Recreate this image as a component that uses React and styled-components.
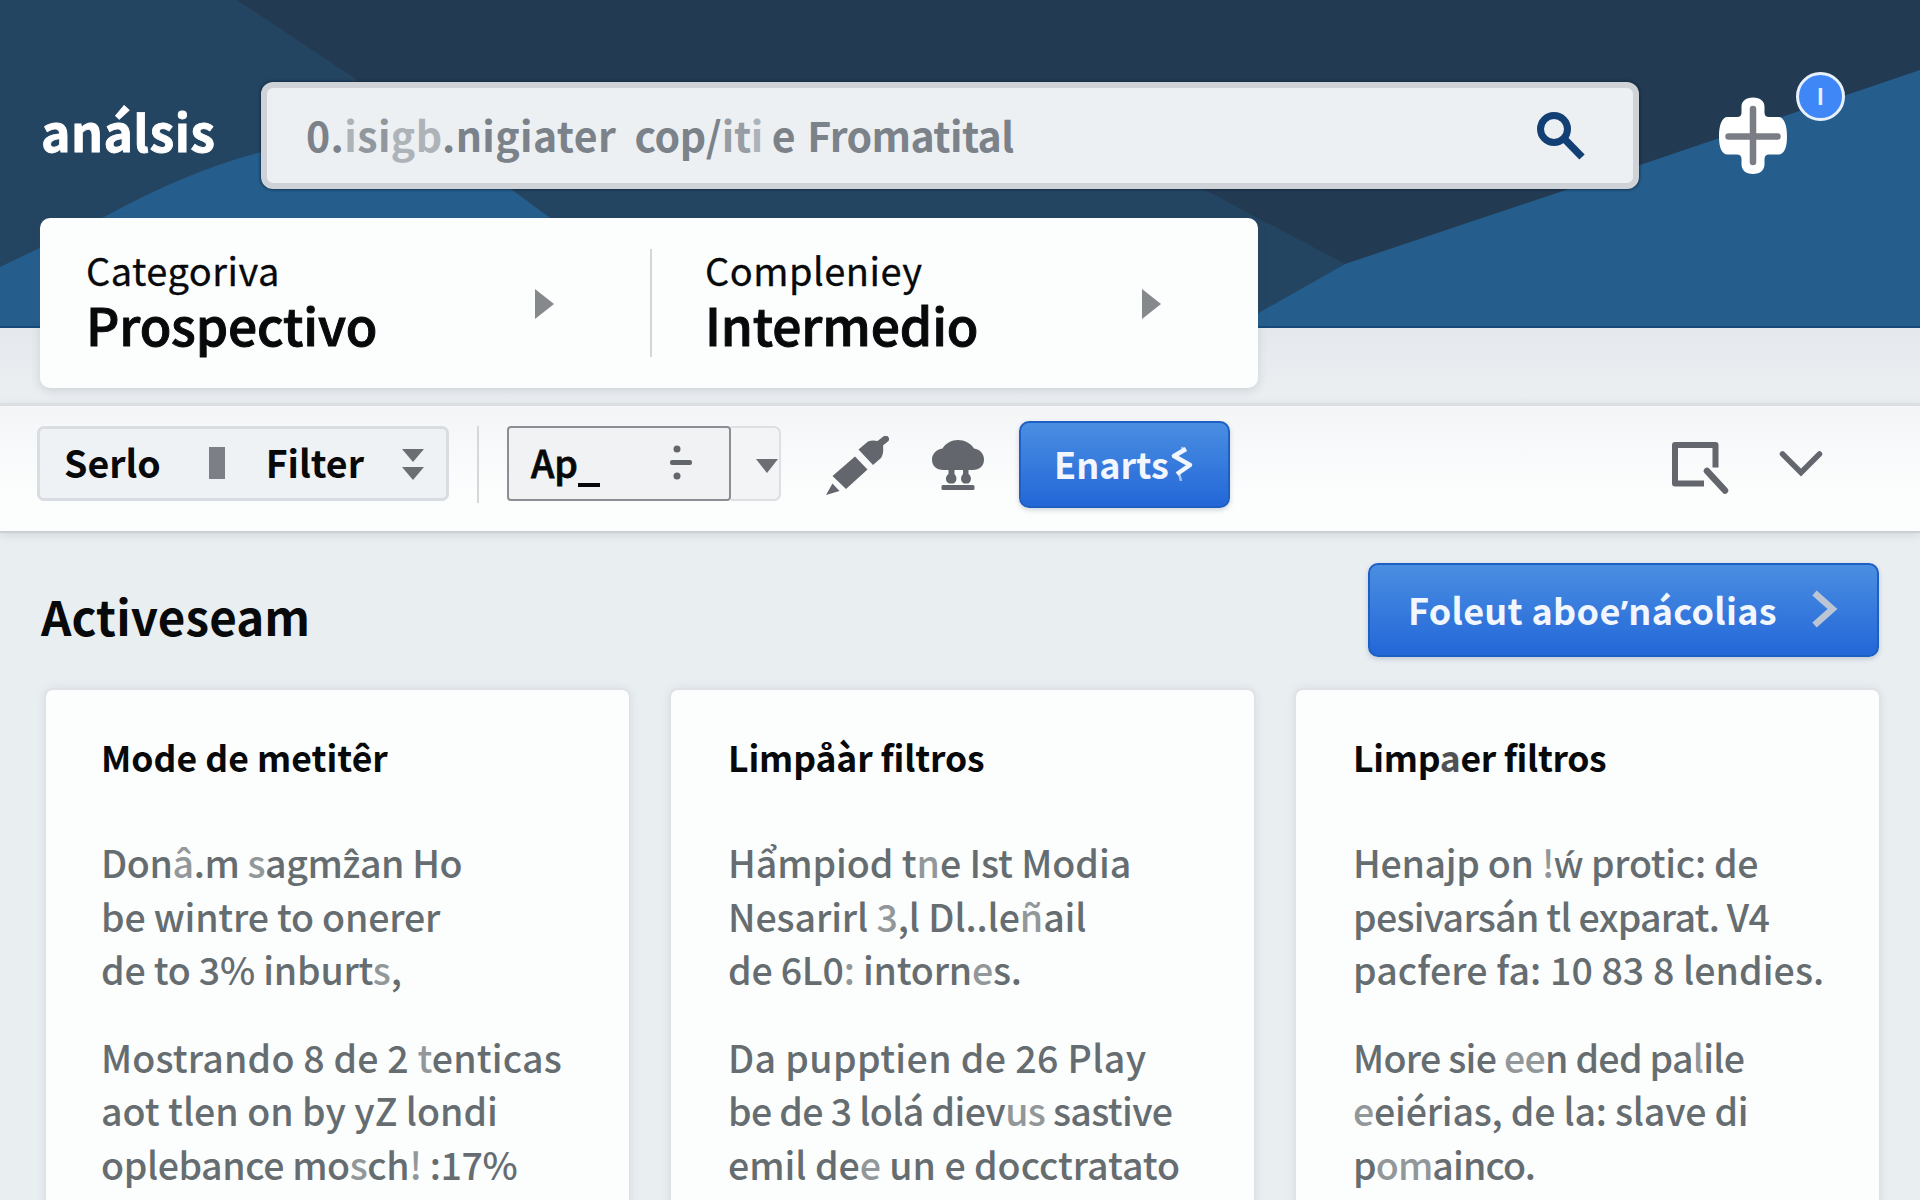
import React from "react";
import styled, { createGlobalStyle } from "styled-components";

const Global = createGlobalStyle`
  *, *::before, *::after { box-sizing: border-box; }
  body {
    margin: 0;
    background: #e9eef1;
    color: #08090b;
    font-family: "Noto Sans CJK SC", "Noto Sans", sans-serif;
  }
  button { font-family: inherit; }
`;

const Page = styled.div`
  width: 1920px;
  height: 1200px;
  overflow: hidden;
  display: flex;
  flex-direction: column;
`;

/* ---------- Header ---------- */

const Header = styled.header`
  position: relative;
  z-index: 2;
  flex: none;
  height: 328px;
  padding: 82px 40px 0;
  display: flex;
  flex-direction: column;
  gap: 29px;
  border-bottom: 2px solid #174a79;
`;

const Backdrop = styled.svg`
  position: absolute;
  inset: 0;
  z-index: -1;
`;

const HeaderRow = styled.div`
  flex: none;
  display: flex;
  align-items: center;
  height: 107px;
`;

const Logo = styled.div`
  width: 221px;
  padding-bottom: 12px;
  padding-left: 1px;
  color: #fff;
  font-size: 50px;
  font-weight: 700;
  letter-spacing: 0.4px;
  line-height: 60px;
  white-space: nowrap;
  -webkit-text-stroke: 0.8px currentColor;
`;

const SearchField = styled.div`
  width: 1378px;
  height: 107px;
  display: flex;
  align-items: center;
  justify-content: space-between;
  padding: 0 46px 0 39px;
  border: 6px solid #cfd2d7;
  border-radius: 12px;
  background: #edf0f3;
  box-shadow: 0 0 3px 1px rgba(12, 30, 50, 0.6);
`;

const Query = styled.span`
  padding-bottom: 4px;
  color: #7b8289;
  font-size: 41px;
  font-weight: 700;
  line-height: 60px;
  white-space: pre;
`;

const Run = styled.span`
  letter-spacing: ${(p) => p.$track}px;
`;

const Soft = styled.span`
  opacity: ${(p) => p.$o || 0.55};
`;

const AddButton = styled.div`
  position: relative;
  margin-left: 79px;
  width: 70px;
  height: 80px;
`;

const Badge = styled.span`
  position: absolute;
  left: 78px;
  top: -24px;
  width: 49px;
  height: 49px;
  display: flex;
  align-items: center;
  justify-content: center;
  padding-bottom: 3px;
  border: 3px solid #e8f1fb;
  border-radius: 50%;
  background: #3f87f6;
  color: #e6eefc;
  font-size: 22px;
  font-weight: 700;
  line-height: 30px;
`;

const PickerCard = styled.section`
  flex: none;
  width: 1218px;
  height: 170px;
  padding: 29px 0 0 46px;
  display: flex;
  border-radius: 10px;
  background: #fcfdfd;
  box-shadow: 0 3px 10px rgba(60, 75, 90, 0.16);
`;

const Picker = styled.div`
  width: ${(p) => p.$width}px;
  height: 110px;
  display: flex;
  justify-content: space-between;
`;

const PickerText = styled.div`
  display: flex;
  flex-direction: column;
`;

const PickerLabel = styled.span`
  font-size: 38px;
  font-weight: 400;
  letter-spacing: 0.5px;
  line-height: 46px;
  -webkit-text-stroke: 0.3px currentColor;
`;

const PickerValue = styled.span`
  font-size: 51.5px;
  font-weight: 500;
  letter-spacing: -0.1px;
  line-height: 62px;
  -webkit-text-stroke: 1px currentColor;
`;

const PickerArrow = styled.span`
  align-self: center;
  margin-top: 4px;
  border-left: 19px solid #86898c;
  border-top: 15px solid transparent;
  border-bottom: 15px solid transparent;
`;

const PickerDivider = styled.span`
  width: 2px;
  height: 108px;
  margin: 2px 53px 0 96px;
  background: #d3d5d8;
`;

/* ---------- Toolbar ---------- */

const Band = styled.div`
  flex: none;
  height: 75px;
  background: linear-gradient(#e5e9ed, #ebeff2);
`;

const Toolbar = styled.nav`
  flex: none;
  height: 130px;
  display: flex;
  align-items: center;
  padding: 0 97px 9px 37px;
  border-top: 3px solid #dcdfe2;
  border-bottom: 2px solid #cbd0d4;
  background: linear-gradient(#f4f5f7, #fcfdfd 70%);
  box-shadow: 0 2px 8px rgba(90, 105, 120, 0.16);
`;

const Group = styled.div`
  width: 412px;
  height: 75px;
  padding: 0 22px 4px 24px;
  margin-bottom: 1px;
  display: flex;
  align-items: center;
  border: 3px solid #d9dce0;
  border-radius: 7px;
  background: #eff2f4;
`;

const ToolLabel = styled.span`
  font-size: 37.5px;
  font-weight: ${(p) => p.$weight || 700};
  line-height: 50px;
  white-space: pre;
`;

const Handle = styled.span`
  width: 16px;
  height: 32px;
  margin: 3px auto 0 48px;
  background: #7d7f87;
`;

const Sorter = styled.span`
  display: flex;
  flex-direction: column;
  gap: 5px;
  margin: 5px 0 0 38px;
`;

const Caret = styled.span`
  border-top: ${(p) => p.$h || 13}px solid #6b6e73;
  border-left: 11.5px solid transparent;
  border-right: 11.5px solid transparent;
`;

const ToolDivider = styled.span`
  width: 2px;
  height: 77px;
  margin: 0 28px;
  background: #d5d8db;
`;

const Entry = styled.div`
  width: 224px;
  height: 75px;
  margin-bottom: 1px;
  padding: 0 36px 4px 22px;
  display: flex;
  align-items: center;
  justify-content: space-between;
  border: 2px solid #8b8f94;
  border-radius: 4px;
  background: #f0f2f4;
`;

const EntryText = styled(ToolLabel)`
  -webkit-text-stroke: 0.8px currentColor;
`;

const Cursor = styled.span`
  display: inline-block;
  width: 22px;
  height: 4px;
  vertical-align: -9px;
  background: #08090b;
`;

const EntryMenu = styled.div`
  width: 50px;
  height: 75px;
  margin-bottom: 1px;
  padding: 5px 1px 0 0;
  display: flex;
  align-items: center;
  justify-content: flex-end;
  border: 2px solid #dde0e3;
  border-left: 0;
  border-radius: 0 7px 7px 0;
  background: #f3f4f6;
`;

const PrimaryButton = styled.button`
  display: flex;
  align-items: center;
  width: ${(p) => p.$width}px;
  height: ${(p) => p.$height}px;
  padding: 0 ${(p) => p.$right}px 2px ${(p) => p.$left}px;
  border: 2px solid #1d5fc2;
  border-radius: 10px;
  background: linear-gradient(#4a8ee2, #2367d8);
  color: #f1f6ff;
  font-size: 36px;
  font-weight: 700;
  letter-spacing: ${(p) => p.$track}px;
  line-height: 50px;
  white-space: nowrap;
  box-shadow: 0 2px 5px rgba(70, 90, 120, 0.25);
`;

const Alt = styled.span`
  font-family: "Noto Sans", sans-serif;
  font-size: 0.95em;
  line-height: 1;
`;

const IconSlot = styled.span`
  display: flex;
  margin-left: ${(p) => p.$left || 0}px;
  margin-top: ${(p) => p.$top || 0}px;
`;

const Spacer = styled.span`
  flex: 1;
`;

/* ---------- Content ---------- */

const Content = styled.main`
  flex: 1;
  padding: 30px 41px 0;
`;

const SectionHead = styled.div`
  height: 94px;
  display: flex;
  align-items: center;
  justify-content: space-between;
`;

const SectionTitle = styled.h1`
  margin: 11px 0 0;
  font-size: 47.5px;
  font-weight: 700;
  letter-spacing: 0.1px;
  line-height: 60px;
`;

const Cards = styled.div`
  display: grid;
  grid-template-columns: repeat(3, 587px);
  gap: 38px;
  margin: 31px 0 0 3px;
`;

const Card = styled.article`
  height: 560px;
  padding: 43px 0 0 ${(p) => p.$inset}px;
  border: 2px solid #dfe3e5;
  border-radius: 9px;
  background: #fcfdfd;
  box-shadow: 0 0 8px rgba(120, 135, 150, 0.14);
`;

const CardTitle = styled.h2`
  margin: 0 0 54px;
  font-size: 35.5px;
  font-weight: 700;
  letter-spacing: ${(p) => p.$track || 0}px;
  line-height: 48px;
  white-space: nowrap;
`;

const Paragraph = styled.p`
  margin: 0 0 34px;
  color: #666d71;
  font-size: 37.5px;
  font-weight: 500;
  line-height: 53.5px;
`;

const Line = styled.span`
  display: block;
  height: 53.5px;
  letter-spacing: ${(p) => p.$track || 0}px;
  white-space: pre;
`;

const cards = [
  {
    title: ["Mode de metitêr"],
    inset: 55,
    track: 0.05,
    body: [
      [
        [-0.4, "Don", "~â", ".m ", "~s", "agmẑan Ho"],
        [-0.2, "be wintre to onerer"],
        [-0.2, "de to 3% inburt", "~s", ","],
      ],
      [
        [0.18, "Mostrando 8 de 2 ", "~t", "enticas"],
        [0, "aot tlen on by yZ londi"],
        [-0.4, "oplebance mo", "~s", "ch", "~!", " :17%"],
      ],
    ],
  },
  {
    title: ["Limpåàr filtros"],
    inset: 57,
    track: -0.12,
    body: [
      [
        [-0.06, "Hẩmpiod t", "~n", "e Ist Modia"],
        [-0.1, "Nesarirl ", "~3", ",l Dl..le", "~ñ", "ail"],
        [-0.2, "de 6L0", "~:", " intorn", "~e", "s."],
      ],
      [
        [0.38, "Da pupptien de 26 Play"],
        [-0.63, "be de 3 lolá diev", "~us", " sastive"],
        [-0.02, "emil de", "~e", " un e docctratato"],
      ],
    ],
  },
  {
    title: ["Limp", "~a", "er filtros"],
    inset: 57,
    track: -0.3,
    body: [
      [
        [-0.3, "Henajp on ", "~!", "^ẃ", " protic: de"],
        [-0.73, "pesivarsán tl exparat. V4"],
        [0.1, "pacfere fa: 10 83 8 lendies."],
      ],
      [
        [-0.7, "More sie ", "~ee", "n ded pa", "~l", "ile"],
        [-0.2, "~e", "eiérias, de la: slave di"],
        [-0.9, "p", "~om", "ainco."],
      ],
    ],
  },
];

const runs = (parts) =>
  parts.map((part, i) => {
    if (part[0] === "~") return <Soft key={i} $o={0.7}>{part.slice(1)}</Soft>;
    if (part[0] === "^") return <Alt key={i}>{part.slice(1)}</Alt>;
    return part;
  });

function SearchIcon() {
  return (
    <svg width="52" height="54" viewBox="0 0 52 54" fill="none" stroke="#123f74">
      <circle cx="19" cy="20" r="13.5" strokeWidth="7" />
      <path d="M28.5 29 47 48" strokeWidth="7.5" />
    </svg>
  );
}

function PlusIcon() {
  return (
    <svg width="70" height="80" viewBox="0 0 70 80">
      <path
        fill="#fff"
        d="M35 1.5c7.500 0 11.500 4 11.500 9v6c0 3 1.500 4.500 4.500 4.500h9.500c5.500 0 8.500 8 8.500 19.500S66 58.500 60.500 58.500H51c-3 0-4.500 1.500-4.500 4.500v5c0 6-4 10-11.500 10s-11.500-4-11.500-10v-5c0-3-1.500-4.500-4.500-4.500H9.500C4 58.500 1 52 1 40.500S4 21 9.500 21H19c3 0 4.500-1.500 4.500-4.500v-6c0-5 4-9 11.500-9Z"
      />
      <path d="M35 13v53M10.500 40.500h49" stroke="#7a7d83" strokeWidth="6.500" strokeLinecap="round" />
    </svg>
  );
}

function DivideIcon() {
  return (
    <svg width="24" height="36" viewBox="0 0 24 36" fill="#63666b">
      <circle cx="8" cy="5" r="3.500" />
      <rect x="1" y="16" width="22" height="5" rx="2" />
      <circle cx="8" cy="32" r="3.500" />
    </svg>
  );
}

function PenIcon() {
  return (
    <svg width="68" height="62" viewBox="0 0 68 62" fill="#63676d">
      <path d="M2 59 8.500 47.500 15.500 55Z" />
      <path d="M8.500 40 31 20.500 43.500 33.500 22 53Z" />
      <path d="M34.500 13.500 44 5.500c3-1.500 6.500-1.300 9.500-.5l6.500-5a3.500 3.500 0 0 1 4.500 5L59 9.500c.5 5 .3 9-2 12.500l-8 7Z" />
    </svg>
  );
}

function CloudIcon() {
  return (
    <svg width="54" height="52" viewBox="0 0 54 52" fill="#63676d">
      <path d="M12.500 31C5 31 1 26.500 1 20.500 1 14.500 5.500 10.500 11.500 9.500 15 4 20.500 1 27 1s12.500 3 16 8.500c6 1 10 5 10 11S49 31 41.500 31Z" />
      <path d="M17.500 30h6v5c3 3 2.500 8-1 9.500h-4.500c-4-2-4-7-.5-9.500ZM32 30h5.500v5c3.500 2.500 3 7.500 0 9.500H33c-3.500-1.500-4-6.500-1-9.500Z" />
      <rect x="10.500" y="46" width="33" height="5" rx="1.500" />
    </svg>
  );
}

function BoltMark() {
  return (
    <svg width="25" height="36" viewBox="0 0 25 36" fill="none" stroke="#f1f6ff" strokeLinejoin="round">
      <path d="M17 4 5 11l16 9L8 29" strokeWidth="4.500" />
      <path d="M13 2l2 5M10 28l2 8" strokeWidth="2.500" opacity="0.6" />
    </svg>
  );
}

function SelectIcon() {
  return (
    <svg width="60" height="54" viewBox="0 0 60 54" fill="none" stroke="#63676d" strokeWidth="6" strokeLinejoin="round">
      <path d="M33 42.500H4V4h40.500v22.500" />
      <path d="M36 30 54 49.500" strokeWidth="6.500" strokeLinecap="round" />
    </svg>
  );
}

function ChevronDown() {
  return (
    <svg width="44" height="28" viewBox="0 0 44 28" fill="none" stroke="#63676d" strokeWidth="5.500" strokeLinecap="round">
      <path d="M3.500 4 22 22.500 40.500 4" />
    </svg>
  );
}

function ChevronRight() {
  return (
    <svg width="28" height="38" viewBox="0 0 28 38" fill="none" stroke="#bcc5d3" strokeWidth="6.500">
      <path d="M3.500 3 21.500 19 3.500 35" />
    </svg>
  );
}

export default function App() {
  return (
    <Page>
      <Global />
      <Header>
        <Backdrop width="1920" height="326" viewBox="0 0 1920 326">
          <rect width="1920" height="326" fill="#233b52" />
          <path fill="#244562" d="M0 0H237L360 82 1000 90 1205 190 1345 264 1232 328H0Z" />
          <path fill="#255e8d" d="M0 267 104 217Q190 170 262 152L470 160 512 190 549 217 700 328H0Z" />
          <path fill="#255e8d" d="M1345 264 1640 165 1920 70V328H1232Z" />
        </Backdrop>
        <HeaderRow>
          <Logo>análsis</Logo>
          <SearchField>
            <Query>
              <Run $track={0.4}>0.<Soft>i</Soft><Soft $o={0.8}>si</Soft><Soft>gb</Soft>.nigiater</Run>
              <Run $track={9}> </Run>
              <Run $track={-0.4}>cop/<Soft $o={0.75}>it</Soft><Soft>i</Soft></Run>
              <Run $track={-0.5}> e</Run>
              <Run $track={3}> </Run>
              <Run $track={-0.6}>Fromatital</Run>
            </Query>
            <SearchIcon />
          </SearchField>
          <AddButton>
            <PlusIcon />
            <Badge>I</Badge>
          </AddButton>
        </HeaderRow>
        <PickerCard>
          <Picker $width={468}>
            <PickerText>
              <PickerLabel>Categoriva</PickerLabel>
              <PickerValue>Prospectivo</PickerValue>
            </PickerText>
            <PickerArrow />
          </Picker>
          <PickerDivider />
          <Picker $width={456}>
            <PickerText>
              <PickerLabel>Compleniey</PickerLabel>
              <PickerValue>Intermedio</PickerValue>
            </PickerText>
            <PickerArrow />
          </Picker>
        </PickerCard>
      </Header>
      <Band />
      <Toolbar>
        <Group>
          <ToolLabel>Serlo</ToolLabel>
          <Handle />
          <ToolLabel>Filter</ToolLabel>
          <Sorter>
            <Caret />
            <Caret />
          </Sorter>
        </Group>
        <ToolDivider />
        <Entry>
          <EntryText $weight={500}>
            Ap
            <Cursor />
          </EntryText>
          <DivideIcon />
        </Entry>
        <EntryMenu>
          <Caret $h={14} />
        </EntryMenu>
        <IconSlot $left={43} $top={5}><PenIcon /></IconSlot>
        <IconSlot $left={39} $top={2}><CloudIcon /></IconSlot>
        <IconSlot $left={34}>
          <PrimaryButton $width={211} $height={87} $left={33} $right={20} $track={0}>
            Enarts
            <BoltMark />
          </PrimaryButton>
        </IconSlot>
        <Spacer />
        <IconSlot $top={8}><SelectIcon /></IconSlot>
        <IconSlot $left={48}><ChevronDown /></IconSlot>
      </Toolbar>
      <Content>
        <SectionHead>
          <SectionTitle>Activeseam</SectionTitle>
          <PrimaryButton $width={511} $height={94} $left={38} $right={38} $track={0.3}>
            <span>
              Foleut aboe<Alt>’</Alt>nácolias
            </span>
            <Spacer />
            <ChevronRight />
          </PrimaryButton>
        </SectionHead>
        <Cards>
          {cards.map((card, i) => (
            <Card key={i} $inset={card.inset}>
              <CardTitle $track={card.track}>{runs(card.title)}</CardTitle>
              {card.body.map((lines, j) => (
                <Paragraph key={j}>
                  {lines.map(([track, ...parts], k) => (
                    <Line key={k} $track={track}>{runs(parts)}</Line>
                  ))}
                </Paragraph>
              ))}
            </Card>
          ))}
        </Cards>
      </Content>
    </Page>
  );
}
